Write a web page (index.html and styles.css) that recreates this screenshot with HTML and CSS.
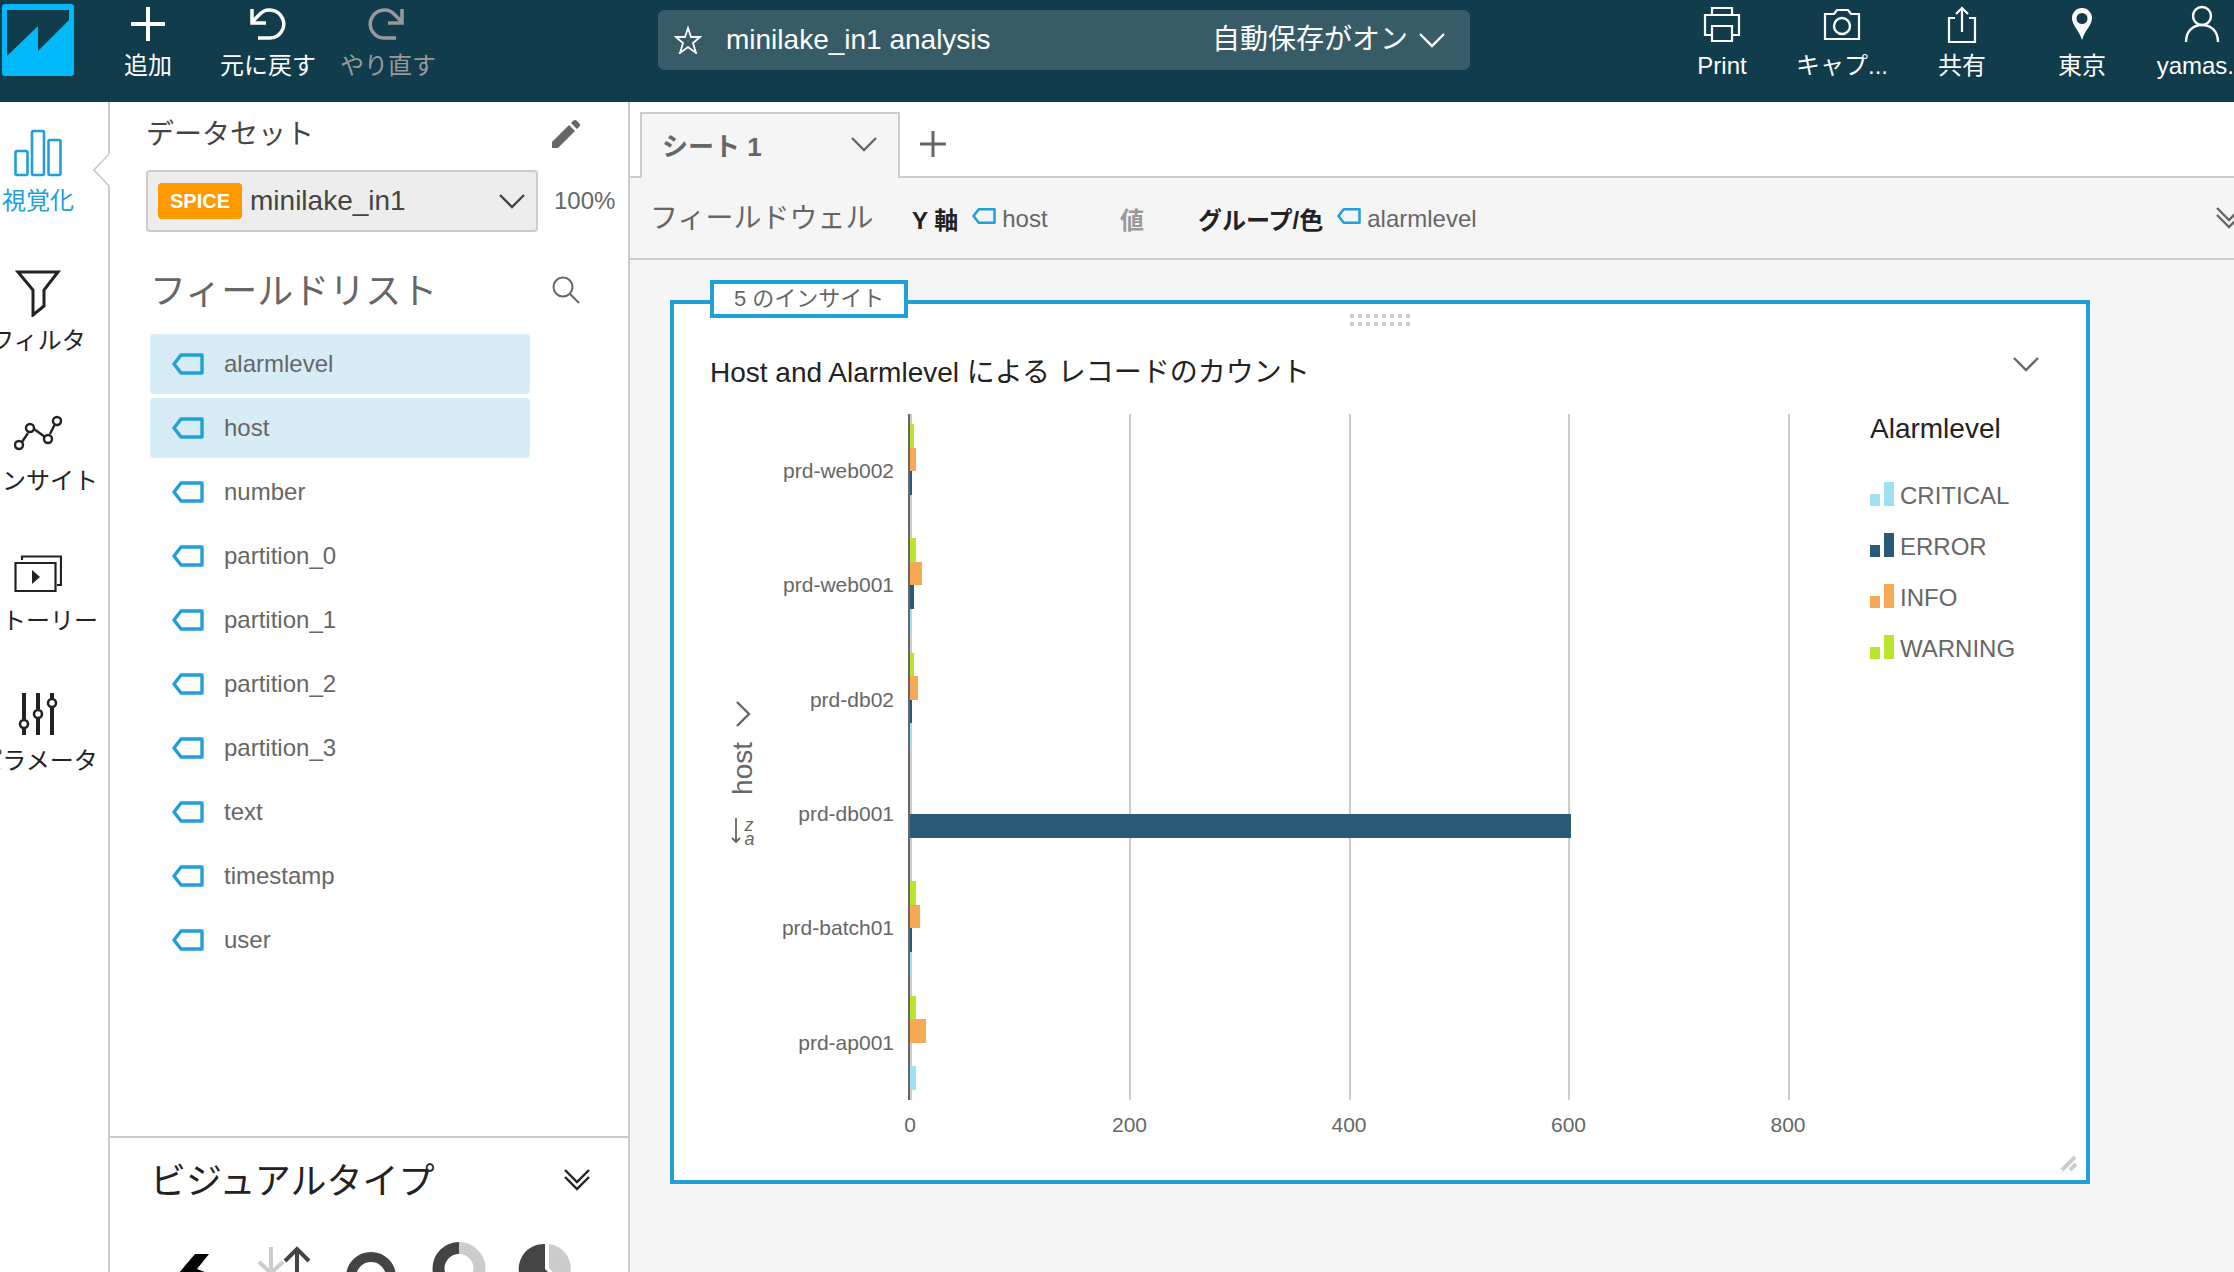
FILE: index.html
```html
<!DOCTYPE html>
<html lang="ja">
<head>
    <meta charset="UTF-8">
    <meta name="viewport" content="width=device-width, initial-scale=1.0">
    <title>minilake_in1 analysis</title>
    <link rel="stylesheet" href="styles.css">
</head>
<body>

    <!-- shared icons -->
    <svg class="sprite" aria-hidden="true">
        <symbol id="chevron" viewBox="0 0 28 16"><path d="M2 2l12 12L26 2" fill="none" stroke="currentColor" stroke-width="2.4"/></symbol>
        <symbol id="double-chevron" viewBox="0 0 26 22"><path d="M1 1l12 12L25 1M1 8l12 12L25 8" fill="none" stroke="currentColor" stroke-width="2.4"/></symbol>
        <symbol id="field" viewBox="0 0 32 22"><path d="M9 2h21v18H9L2 11z" fill="none" stroke="#209fd9" stroke-width="3.4" stroke-linejoin="round"/></symbol>
        <symbol id="bars" viewBox="0 0 24 24"><path d="M0 12h10v12H0zM14 0h10v24H14z" fill="currentColor"/></symbol>
    </svg>

    <header class="topbar">
        <a class="logo" href="#" aria-label="QuickSight">
            <svg width="72" height="72" viewBox="0 0 72 72"><rect width="72" height="72" rx="3" fill="#00b9f9"/><path d="M5 6h62v10L36 47V22L5 52z" fill="#103c4c"/></svg>
        </a>
        <button class="tool">
            <svg width="40" height="40" viewBox="0 0 40 40"><path d="M20 3v34M3 20h34" stroke="currentColor" stroke-width="4"/></svg>
            <span>追加</span>
        </button>
        <button class="tool">
            <svg width="40" height="40" viewBox="0 0 40 40"><path d="M10 34h11a14 14 0 1 0-10-23l-6 6M4 5v14h14" fill="none" stroke="currentColor" stroke-width="3.5"/></svg>
            <span>元に戻す</span>
        </button>
        <button class="tool" disabled>
            <svg width="40" height="40" viewBox="0 0 40 40"><path d="M28 34H17a14 14 0 1 1 10-23l6 6M34 5v14H20" fill="none" stroke="currentColor" stroke-width="3.5"/></svg>
            <span>やり直す</span>
        </button>
        <div class="analysis">
            <svg width="28" height="28" viewBox="0 0 28 28"><path d="M14 2l3 9h9l-7 6 3 10-8-6-8 6 3-10-7-6h9z" fill="none" stroke="currentColor" stroke-width="1.8"/></svg>
            <h1>minilake_in1 analysis</h1>
            <button class="autosave">自動保存がオン <svg width="28" height="16"><use href="#chevron"/></svg></button>
        </div>
        <nav class="actions">
            <button class="tool">
                <svg width="40" height="40" viewBox="0 0 40 40"><path d="M10 11V4h20v7M10 31H3V11h34v20h-7M10 22h20v15H10z" fill="none" stroke="currentColor" stroke-width="2.2"/></svg>
                <span>Print</span>
            </button>
            <button class="tool">
                <svg width="40" height="40" viewBox="0 0 40 40"><path d="M3 10h9l3-4h11l3 4h8v25H3z" fill="none" stroke="currentColor" stroke-width="2.2"/><circle cx="20" cy="22" r="8" fill="none" stroke="currentColor" stroke-width="2.4"/></svg>
                <span>キャプ...</span>
            </button>
            <button class="tool">
                <svg width="40" height="40" viewBox="0 0 40 40"><path d="M13 14H7v24h26V14h-6M20 28V4M14 10l6-6 6 6" fill="none" stroke="currentColor" stroke-width="2.2"/></svg>
                <span>共有</span>
            </button>
            <button class="tool">
                <svg width="40" height="40" viewBox="0 0 40 40"><path d="M20 4c-6 0-10 5-10 10 0 7 7 12 10 22 3-10 10-15 10-22 0-5-4-10-10-10zm0 5a5 5 0 1 1 0 11 5 5 0 0 1 0-11z" fill="currentColor" fill-rule="evenodd"/></svg>
                <span>東京</span>
            </button>
            <button class="tool">
                <svg width="40" height="40" viewBox="0 0 40 40"><circle cx="20" cy="12" r="9" fill="none" stroke="currentColor" stroke-width="2.4"/><path d="M4 38c0-11 7-17 16-17s16 6 16 17" fill="none" stroke="currentColor" stroke-width="2.4"/></svg>
                <span>yamas...</span>
            </button>
        </nav>
    </header>

    <div class="workspace">
        <nav class="rail">
            <a class="active" href="#">
                <svg width="48" height="48" viewBox="0 0 48 48"><g fill="none" stroke="currentColor" stroke-width="2.6"><rect x="1.5" y="22" width="12" height="24" rx="1.5"/><rect x="18" y="2" width="12" height="44" rx="1.5"/><rect x="34.500" y="11" width="12" height="35" rx="1.5"/></g></svg>
                <span>視覚化</span>
            </a>
            <a href="#">
                <svg width="48" height="48" viewBox="0 0 48 48"><path d="M4 3h40L30 21v16L19 46V21z" fill="none" stroke="currentColor" stroke-width="3"/></svg>
                <span>フィルタ</span>
            </a>
            <a href="#">
                <svg width="48" height="48" viewBox="0 0 48 48"><g fill="none" stroke="currentColor" stroke-width="2.4"><path d="M8 33l6-9M20 20l11 8M36 25l5-10"/><circle cx="5" cy="36" r="4"/><circle cx="16" cy="19" r="4"/><circle cx="34" cy="30" r="4"/><circle cx="43" cy="12" r="4"/></g></svg>
                <span>インサイト</span>
            </a>
            <a href="#">
                <svg width="48" height="48" viewBox="0 0 48 48"><path d="M1.500 14h40v28h-40zM8 11V7.500h39V36h-4" fill="none" stroke="currentColor" stroke-width="2.2"/><path d="M18 21v14l8-7z" fill="currentColor"/></svg>
                <span>ストーリー</span>
            </a>
            <a href="#">
                <svg width="48" height="48" viewBox="0 0 48 48"><path d="M10 4v26M10 38v8M24 4v16M24 28v18M38 4v6M38 18v28" stroke="currentColor" stroke-width="4"/><g fill="none" stroke="currentColor" stroke-width="2.6"><circle cx="10" cy="35" r="4"/><circle cx="24" cy="25" r="4"/><circle cx="38" cy="14" r="4"/></g></svg>
                <span>パラメータ</span>
            </a>
            <svg class="notch" width="17" height="34" viewBox="0 0 17 34"><path d="M17 0v34L1 17z" fill="#fff"/><path d="M16 1L1 17l15 16" fill="none" stroke="#ccc" stroke-width="1.8"/></svg>
        </nav>

        <aside class="panel">
            <section class="data">
                <div class="dataset-head">
                    <h2>データセット</h2>
                    <button aria-label="編集"><svg width="28" height="28" viewBox="0 0 28 28"><path d="M0 28v-6L17 5l6 6L6 28zM19 3l2-2q2-2 4 0l2 2q2 2 0 4l-2 2z" fill="#666"/></svg></button>
                </div>
                <div class="dataset">
                    <button class="dataset-select"><b>SPICE</b> minilake_in1 <svg width="28" height="16"><use href="#chevron"/></svg></button>
                    <span>100%</span>
                </div>
                <div class="fields-head">
                    <h2>フィールドリスト</h2>
                    <button aria-label="検索"><svg width="28" height="28" viewBox="0 0 28 28"><g fill="none" stroke="#666" stroke-width="2"><circle cx="11" cy="11" r="9.500"/><path d="M18 18l9 9"/></g></svg></button>
                </div>
                <ul class="fields">
                    <li class="selected"><svg width="32" height="22"><use href="#field"/></svg>alarmlevel</li>
                    <li class="selected"><svg width="32" height="22"><use href="#field"/></svg>host</li>
                    <li><svg width="32" height="22"><use href="#field"/></svg>number</li>
                    <li><svg width="32" height="22"><use href="#field"/></svg>partition_0</li>
                    <li><svg width="32" height="22"><use href="#field"/></svg>partition_1</li>
                    <li><svg width="32" height="22"><use href="#field"/></svg>partition_2</li>
                    <li><svg width="32" height="22"><use href="#field"/></svg>partition_3</li>
                    <li><svg width="32" height="22"><use href="#field"/></svg>text</li>
                    <li><svg width="32" height="22"><use href="#field"/></svg>timestamp</li>
                    <li><svg width="32" height="22"><use href="#field"/></svg>user</li>
                </ul>
            </section>
            <section class="visual-types">
                <div class="visual-head">
                    <h2>ビジュアルタイプ</h2>
                    <button aria-label="折りたたむ"><svg width="26" height="22"><use href="#double-chevron"/></svg></button>
                </div>
                <div class="visual-list">
                    <svg width="56" height="56" viewBox="0 0 56 56"><path d="M27 14h14L29 29l13 5-28 22 8-17-12-5z" fill="#000"/></svg>
                    <svg width="56" height="56" viewBox="0 0 56 56"><path d="M15 7v26M3 22l12 11 12-11" fill="none" stroke="#ccc" stroke-width="4"/><path d="M41 50V9M29 21L41 9l12 12" fill="none" stroke="#444" stroke-width="4"/></svg>
                    <svg width="56" height="56" viewBox="0 0 56 56"><path d="M8 37a20 20 0 0 1 40 0" fill="none" stroke="#444" stroke-width="10"/></svg>
                    <svg width="56" height="56" viewBox="0 0 56 56"><path d="M28 8a20.500 20.500 0 0 0 0 41" fill="none" stroke="#444" stroke-width="12"/><path d="M28 8a20.500 20.500 0 0 1 0 41" fill="none" stroke="#ccc" stroke-width="12"/></svg>
                    <svg width="56" height="56" viewBox="0 0 56 56"><path d="M27 4v25l17 17A25 25 0 1 1 27 4z" fill="#444"/><path d="M31 4a25 25 0 0 1 15 42L31 28z" fill="#ccc"/></svg>
                </div>
            </section>
        </aside>

        <main class="main">
            <div class="tabs">
                <button class="tab">シート 1 <svg width="28" height="16"><use href="#chevron"/></svg></button>
                <button class="add-tab" aria-label="シートを追加"><svg width="26" height="26" viewBox="0 0 26 26"><path d="M13 0v26M0 13h26" stroke="currentColor" stroke-width="3"/></svg></button>
            </div>
            <div class="wells">
                <h2>フィールドウェル</h2>
                <div class="well y-well"><b>Y 軸</b><svg width="24" height="18"><use href="#field"/></svg><span>host</span></div>
                <div class="well value-well"><b>値</b></div>
                <div class="well"><b>グループ/色</b><svg width="24" height="18"><use href="#field"/></svg><span>alarmlevel</span></div>
                <button class="expand" aria-label="展開"><svg width="26" height="22"><use href="#double-chevron"/></svg></button>
            </div>

            <div class="canvas">
                <article class="visual">
                    <button class="insights">5 のインサイト</button>
                    <svg class="drag" width="60" height="12" viewBox="0 0 60 12"><path d="M0 2h60M0 10h60" stroke="#ccc" stroke-width="4" stroke-dasharray="4"/></svg>
                    <header class="visual-title">
                        <h3>Host and Alarmlevel による レコードのカウント</h3>
                        <button aria-label="メニュー"><svg width="28" height="16"><use href="#chevron"/></svg></button>
                    </header>
                    <div class="chart">
                        <div class="axis-title">
                            <svg width="16" height="28" viewBox="0 0 16 28"><path d="M2 2l12 12L2 26" fill="none" stroke="#666" stroke-width="2.4"/></svg>
                            <span class="axis-name">host</span>
                            <span class="sort">
                                <svg width="10" height="26" viewBox="0 0 10 26"><path d="M5 0v24M1 20l4 4 4-4" fill="none" stroke="#666" stroke-width="1.8"/></svg>
                                <span class="sort-order"><i>z</i><i>a</i></span>
                            </span>
                        </div>
                        <div class="hosts">
                            <span>prd-web002</span>
                            <span>prd-web001</span>
                            <span>prd-db02</span>
                            <span>prd-db001</span>
                            <span>prd-batch01</span>
                            <span>prd-ap001</span>
                        </div>
                        <div class="plot">
                            <div class="group">
                                <div class="bar warning" style="width: 0.5%"></div>
                                <div class="bar info" style="width: 0.7%"></div>
                                <div class="bar error" style="width: 0.2%"></div>
                                <div class="bar critical" style="width: 0%"></div>
                            </div>
                            <div class="group">
                                <div class="bar warning" style="width: 0.7%"></div>
                                <div class="bar info" style="width: 1.4%"></div>
                                <div class="bar error" style="width: 0.5%"></div>
                                <div class="bar critical" style="width: 0.2%"></div>
                            </div>
                            <div class="group">
                                <div class="bar warning" style="width: 0.5%"></div>
                                <div class="bar info" style="width: 0.9%"></div>
                                <div class="bar error" style="width: 0.2%"></div>
                                <div class="bar critical" style="width: 0.2%"></div>
                            </div>
                            <div class="group">
                                <div class="bar warning" style="width: 0%"></div>
                                <div class="bar info" style="width: 0%"></div>
                                <div class="bar error" style="width: 75.3%"></div>
                                <div class="bar critical" style="width: 0%"></div>
                            </div>
                            <div class="group">
                                <div class="bar warning" style="width: 0.7%"></div>
                                <div class="bar info" style="width: 1.1%"></div>
                                <div class="bar error" style="width: 0.2%"></div>
                                <div class="bar critical" style="width: 0.2%"></div>
                            </div>
                            <div class="group">
                                <div class="bar warning" style="width: 0.7%"></div>
                                <div class="bar info" style="width: 1.8%"></div>
                                <div class="bar error" style="width: 0%"></div>
                                <div class="bar critical" style="width: 0.7%"></div>
                            </div>
                        </div>
                        <div class="legend">
                            <h4>Alarmlevel</h4>
                            <ul>
                                <li><svg class="critical" width="24" height="24"><use href="#bars"/></svg>CRITICAL</li>
                                <li><svg class="error" width="24" height="24"><use href="#bars"/></svg>ERROR</li>
                                <li><svg class="info" width="24" height="24"><use href="#bars"/></svg>INFO</li>
                                <li><svg class="warning" width="24" height="24"><use href="#bars"/></svg>WARNING</li>
                            </ul>
                        </div>
                        <div class="ticks">
                            <span>0</span><span>200</span><span>400</span><span>600</span><span>800</span>
                        </div>
                    </div>
                    <svg class="grip" width="18" height="18" viewBox="0 0 18 18"><path d="M2 16L15 3M10 16l6-6" stroke="#ccc" stroke-width="4"/></svg>
                </article>
            </div>
        </main>
    </div>

</body>
</html>
```

FILE: styles.css
```css
* {
    box-sizing: border-box;
}
body {
    display: flex;
    flex-direction: column;
    height: 100vh;
    margin: 0;
    overflow: hidden;
    font-family: "Liberation Sans", "Noto Sans CJK JP", sans-serif;
    font-size: 24px;
    color: #666;
    background-color: #fff;
}
h1, h2, h3, h4, ul {
    margin: 0;
    padding: 0;
    font-weight: normal;
    list-style: none;
}
button {
    padding: 0;
    border: none;
    background: none;
    font: inherit;
    color: inherit;
    cursor: pointer;
}
svg {
    display: block;
    flex-shrink: 0;
}
.sprite {
    position: absolute;
    width: 0;
    height: 0;
}

/* top bar */
.topbar {
    display: flex;
    align-items: flex-start;
    flex-shrink: 0;
    height: 102px;
    margin-right: -28px;
    background-color: #103c4c;
    color: #fff;
}
.logo {
    width: 88px;
    padding: 4px 2px;
}
.tool {
    display: flex;
    flex-direction: column;
    align-items: center;
    flex-shrink: 0;
    width: 120px;
    padding-top: 4px;
    line-height: 44px;
    white-space: nowrap;
}
.tool:disabled {
    color: #999;
}
.analysis {
    display: flex;
    align-items: center;
    flex: 0 1 812px;
    height: 60px;
    margin: 10px auto 0 210px;
    padding: 0 24px 0 16px;
    border-radius: 6px;
    background-color: #375b67;
    font-size: 28px;
}
.analysis h1 {
    flex: 1;
    padding-left: 24px;
    font-size: 28px;
}
.autosave {
    display: flex;
    align-items: center;
    gap: 10px;
    line-height: 36px;
}
.actions {
    display: flex;
}

/* left rail */
.workspace {
    display: flex;
    flex: 1;
    min-height: 0;
}
.rail {
    position: relative;
    flex-shrink: 0;
    width: 146px;
    margin-left: -36px;
    padding: 27px 0 0 4px;
    border-right: 2px solid #ccc;
}
.rail a {
    display: flex;
    flex-direction: column;
    align-items: center;
    gap: 8px;
    height: 140px;
    line-height: 32px;
    color: #222;
    text-decoration: none;
    white-space: nowrap;
}
.rail .active {
    color: #209fd9;
}
.notch {
    position: absolute;
    top: 51px;
    right: -2px;
}

/* data panel */
.panel {
    display: flex;
    flex-direction: column;
    flex-shrink: 0;
    width: 520px;
    border-right: 2px solid #ccc;
}
.data {
    flex: 1;
    padding-top: 12px;
}
.dataset-head,
.fields-head,
.visual-head {
    display: flex;
    align-items: center;
    justify-content: space-between;
    padding: 0 48px 0 40px;
}
.dataset-head h2,
.fields-head h2,
.visual-head h2 {
    padding-bottom: 4px;
}
.dataset-head {
    height: 40px;
    padding-left: 36px;
    color: #444;
}
.dataset-head h2 {
    font-size: 28px;
}
.dataset {
    display: flex;
    align-items: center;
    gap: 16px;
    padding: 16px 0 0 36px;
}
.dataset-select {
    display: flex;
    align-items: center;
    width: 392px;
    height: 62px;
    padding: 0 10px;
    border: 2px solid #ccc;
    border-radius: 4px;
    background-color: #ededed;
    font-size: 28px;
    color: #444;
}
.dataset-select b {
    margin-right: 8px;
    padding: 0 12px;
    border-radius: 4px;
    background-color: #f90;
    font-size: 20px;
    line-height: 36px;
    color: #fff;
}
.dataset-select svg {
    margin-left: auto;
}
.fields-head {
    height: 60px;
    margin-top: 28px;
}
.fields-head h2,
.visual-head h2 {
    font-size: 36px;
}
.fields {
    display: flex;
    flex-direction: column;
    gap: 4px;
    padding: 14px 98px 0 40px;
}
.fields li {
    display: flex;
    align-items: center;
    gap: 20px;
    height: 60px;
    padding-left: 22px;
    border-radius: 4px;
}
.fields .selected {
    background-color: #d6ecf7;
}
.visual-types {
    height: 136px;
    border-top: 2px solid #ccc;
    overflow: hidden;
    color: #222;
}
.visual-head {
    height: 84px;
    padding-right: 38px;
}
.visual-list {
    display: flex;
    justify-content: space-between;
    padding: 18px 54px 0 58px;
}

/* sheet */
.main {
    display: flex;
    flex-direction: column;
    flex: 1;
    min-width: 0;
    background-color: #f5f5f5;
}
.tabs {
    display: flex;
    height: 76px;
    padding: 10px 10px 0;
    background-color: #fff;
    box-shadow: inset 0 -2px #ccc;
}
.tab {
    display: flex;
    align-items: center;
    justify-content: space-between;
    width: 260px;
    padding: 0 20px 4px;
    border: 2px solid #ccc;
    border-bottom: none;
    background-color: #f5f5f5;
    font-size: 26px;
    font-weight: bold;
}
.add-tab {
    padding: 0 20px 2px;
}
.wells {
    display: flex;
    align-items: center;
    height: 82px;
    padding-left: 20px;
    border-bottom: 2px solid #ccc;
}
.wells h2 {
    width: 262px;
    padding-bottom: 4px;
    font-size: 28px;
}
.well {
    display: flex;
    align-items: center;
    gap: 6px;
}
.well svg {
    margin-bottom: 4px;
}
.well span {
    padding-top: 2px;
}
.well b {
    margin-right: 8px;
    color: #222;
}
.y-well {
    width: 208px;
}
.value-well {
    width: 78px;
}
.value-well b {
    color: #999;
}
.expand {
    margin: 0 -8px 0 auto;
}
.canvas {
    flex: 1;
    padding: 40px 144px 0 40px;
}

/* visual */
.visual {
    position: relative;
    padding: 38px 36px 30px;
    border: 4px solid #209fd9;
    background-color: #fff;
}
.insights {
    position: absolute;
    top: -24px;
    left: 36px;
    padding: 0 20px;
    border: 4px solid #209fd9;
    background-color: #fff;
    font-size: 22px;
    line-height: 30px;
}
.drag {
    position: absolute;
    top: 10px;
    left: 50%;
    margin-left: -30px;
}
.visual-title {
    display: flex;
    justify-content: space-between;
    padding-right: 10px;
}
.visual-title h3 {
    font-size: 28px;
    line-height: 62px;
    color: #222;
}
.visual-title button {
    align-self: flex-start;
    padding-top: 14px;
}
.chart {
    display: grid;
    grid-template-columns: 46px 138px 1fr 180px;
    grid-template-rows: 686px 50px;
    padding-top: 10px;
}
.axis-title {
    display: flex;
    flex-direction: column;
    align-items: center;
    justify-content: center;
    gap: 14px;
    padding: 32px 0 0 20px;
}
.axis-name {
    writing-mode: vertical-rl;
    transform: rotate(180deg);
    font-size: 28px;
}
.sort {
    display: flex;
    gap: 3px;
    padding-top: 10px;
}
.sort-order {
    display: flex;
    flex-direction: column;
    font-size: 18px;
    line-height: 14px;
}
.hosts {
    display: flex;
    flex-direction: column;
    font-size: 21px;
    text-align: right;
}
.hosts span {
    display: flex;
    align-items: center;
    justify-content: flex-end;
    flex: 1;
}
.plot {
    display: flex;
    flex-direction: column;
    margin: 0 82px 0 14px;
    border-left: 2px solid #666;
    background: repeating-linear-gradient(to right, #ccc 0 2px, transparent 2px 25%);
    box-shadow: 2px 0 #ccc;
}
.group {
    display: flex;
    flex-direction: column;
    flex: 1;
    padding: 10px 0;
}
.bar {
    flex: 1;
    background-color: currentColor;
}
.critical {
    color: #9edff2;
}
.error {
    color: #295b78;
}
.info {
    color: #f7aa55;
}
.warning {
    color: #b9e52d;
}
.legend h4 {
    font-size: 28px;
    line-height: 30px;
    color: #222;
}
.legend ul {
    padding-top: 26px;
}
.legend li {
    display: flex;
    align-items: center;
    gap: 6px;
    height: 51px;
}
.legend svg {
    margin-bottom: 4px;
}
.ticks {
    display: flex;
    justify-content: space-between;
    grid-column: 3;
    margin: 0 52px 0 -14px;
    font-size: 21px;
    line-height: 50px;
}
.ticks span {
    width: 60px;
    text-align: center;
}
.grip {
    position: absolute;
    right: 8px;
    bottom: 8px;
}
```
